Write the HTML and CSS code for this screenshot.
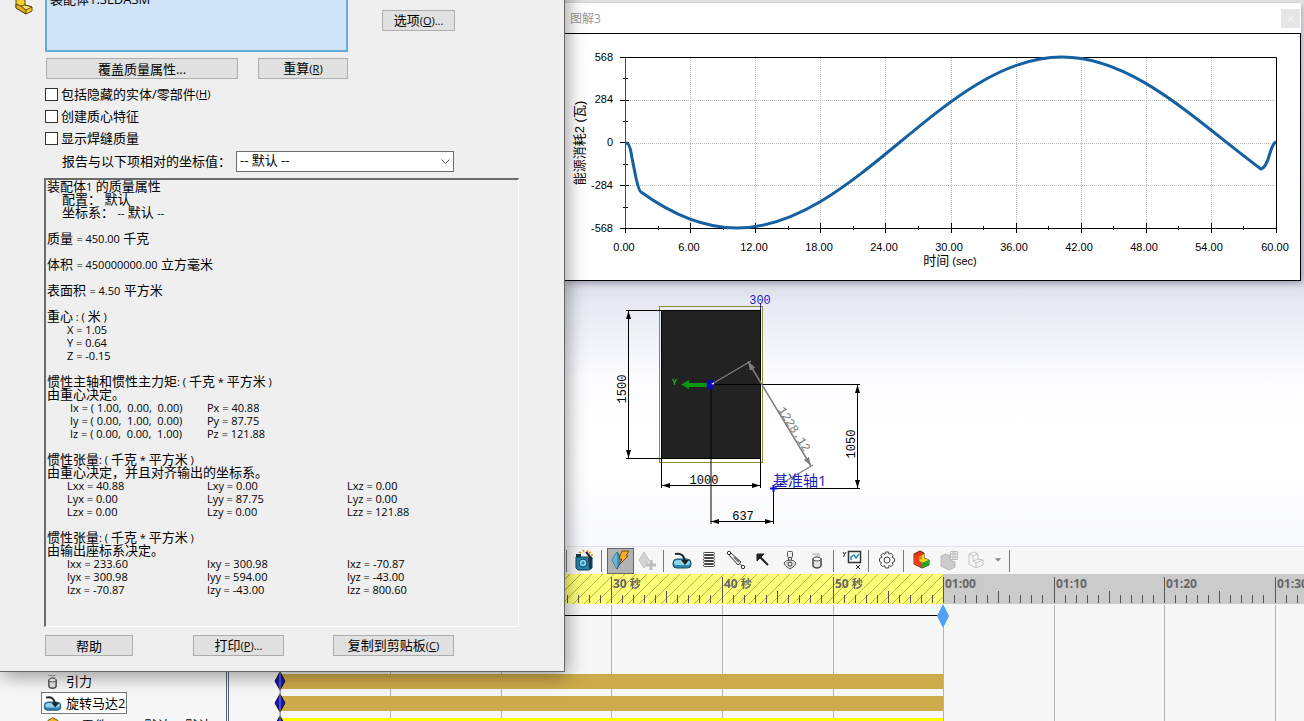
FILE: index.html
```html
<!DOCTYPE html>
<html lang="zh-CN">
<head>
  <meta charset="UTF-8" />
  <meta name="viewport" content="width=device-width, initial-scale=1.0"/>
  <title>质量属性</title>
  <link rel="stylesheet" href="styles.css">
</head>
<body>
  <div class="app">

    <!-- Model view -->
    <main class="viewport">
      <svg class="model" viewBox="0 0 1304 546">
        <defs>
          <marker id="arrow" viewBox="0 0 8 6" refX="8" refY="3" markerWidth="8" markerHeight="6" markerUnits="userSpaceOnUse" orient="auto-start-reverse">
            <path d="M0 0.5L8 3L0 5.5z" fill="#000"/>
          </marker>
          <marker id="arrowGray" viewBox="0 0 9 6" refX="9" refY="3" markerWidth="9" markerHeight="6" markerUnits="userSpaceOnUse" orient="auto-start-reverse">
            <path d="M0 0L9 3L0 6z" fill="#808080"/>
          </marker>
        </defs>
        <rect x="661" y="310" width="100" height="149" fill="#222"/>
        <rect x="659.5" y="306.5" width="103" height="156" fill="none" stroke="#8c8c32"/>
        <path class="dim" d="M626 310.5H761M626 458.5H761M661.5 310V488M760.5 310V488"/>
        <path class="dim" d="M711 384V524M711 384.5H860M773.5 489V524M773 488.5H860"/>
        <g class="dim">
          <path marker-start="url(#arrow)" marker-end="url(#arrow)" d="M628.5 311V458"/>
          <path marker-start="url(#arrow)" marker-end="url(#arrow)" d="M662 485.5H760"/>
          <path marker-start="url(#arrow)" marker-end="url(#arrow)" d="M711 521.5H773"/>
          <path marker-start="url(#arrow)" marker-end="url(#arrow)" d="M857.5 385V488"/>
        </g>
        <path d="M712 384L751 361M774 488L813 465" stroke="#808080" stroke-width="1.3"/>
        <path d="M748 361.500L811 466" stroke="#808080" stroke-width="1.5" marker-start="url(#arrowGray)" marker-end="url(#arrowGray)"/>
        <path d="M760.5 303V310" stroke="#22b"/>
        <path d="M681 384.500L689 380V383H708V387H689V389z" fill="#0c960c"/>
        <ellipse cx="710.5" cy="384.500" rx="4" ry="5" fill="#0a0ab4"/>
        <path d="M711 384l3-1.500v2z" fill="#fff"/>
        <path d="M770 488.500H777M773.500 485V492" stroke="#11d" stroke-width="2"/>
        <text class="axis-y" x="672" y="385">Y</text>
        <text class="dim-text blue" x="760" y="304">300</text>
        <text class="dim-text" x="704" y="484">1000</text>
        <text class="dim-text" x="743" y="520">637</text>
        <text class="dim-text" transform="translate(626 389) rotate(-90)">1500</text>
        <text class="dim-text" transform="translate(855 444) rotate(-90)">1050</text>
        <text class="dim-text gray" transform="translate(791 431) rotate(58)">1228.12</text>
        <text class="axis-name" x="773" y="486">基准轴1</text>
      </svg>
    </main>

    <!-- Motion study -->
    <section class="motion">
      <div class="toolbar">
        <span class="sep"></span>
        <button class="tool" aria-label="保存动画">
          <svg viewBox="0 0 22 22"><path d="M2 8h12l4 1v10l-3 2H4l-2-2z" fill="#2586ac" stroke="#123c50"/><path d="M2 5h5v3H2zM14 9l4 1v9l-3 1z" fill="#16384a"/><circle cx="9" cy="14" r="4" fill="#8ad1ec" stroke="#11475f"/><circle cx="9" cy="14" r="1.500" fill="#2586ac"/><path d="M12 3l6 7" stroke="#222" stroke-width="2"/><path d="M5 3l2 1M9 1l1 2M14 1l-1 2M17 3l-2 1M19 6h-2" stroke="#ec8b13" stroke-width="1.500"/></svg>
        </button>
        <span class="sep"></span>
        <button class="tool pressed" aria-label="自动键码">
          <svg viewBox="0 0 22 22"><path d="M8 3l5 8-5 9-5-9z" fill="#3c91bd" stroke="#1d5877"/><path d="M8 3v17l-5-9z" fill="#67b5d8"/><path d="M13 2h7l-3 5h2l-9 9 3-6h-3z" fill="#ffae25" stroke="#7a4d12"/></svg>
        </button>
        <button class="tool" aria-label="添加键码">
          <svg viewBox="0 0 22 22"><path d="M8 3l5 8-5 8-5-8z" fill="#d4d4d4" stroke="#c2c2c2"/><path d="M15 11v10M10 16h10" stroke="#bdbdbd" stroke-width="3"/></svg>
        </button>
        <span class="sep"></span>
        <button class="tool" aria-label="马达">
          <svg viewBox="0 0 22 22"><use href="#motor"/></svg>
        </button>
        <button class="tool" aria-label="弹簧">
          <svg viewBox="0 0 22 22"><g fill="#fff" stroke="#444"><rect x="5.500" y="3.500" width="11" height="2" rx="1"/><rect x="5.500" y="6.500" width="11" height="2" rx="1"/><rect x="5.500" y="9.500" width="11" height="2" rx="1"/><rect x="5.500" y="12.500" width="11" height="2" rx="1"/><rect x="5.500" y="15.500" width="11" height="2" rx="1"/></g></svg>
        </button>
        <button class="tool" aria-label="阻尼">
          <svg viewBox="0 0 22 22"><path d="M4 4l14 14" stroke="#444"/><path d="M6 4l10 9-3 3-9-10z" fill="#eee" stroke="#333"/><path d="M9 8l5 5" stroke="#777" stroke-width="2"/><circle cx="4" cy="4" r="1.700" fill="#fff" stroke="#333"/><circle cx="18" cy="18" r="1.700" fill="#fff" stroke="#333"/></svg>
        </button>
        <button class="tool" aria-label="力">
          <svg viewBox="0 0 22 22"><path d="M7 7l9 9" stroke="#222" stroke-width="2"/><path d="M5 5h7l-3 3-4 4z" fill="#222" stroke="#222"/></svg>
        </button>
        <button class="tool" aria-label="接触">
          <svg viewBox="0 0 22 22"><rect x="8.500" y="2.500" width="5" height="6" rx="1" fill="#eee" stroke="#555"/><path d="M9.500 8v4M12.500 8v4" stroke="#555"/><path d="M5 14q2-3 6-3t6 3q-1 3-3 4l-3 2-3-2q-2-1-3-4z" fill="#ddd" stroke="#555"/><circle cx="11" cy="15" r="2" fill="#fff" stroke="#333"/></svg>
        </button>
        <button class="tool" aria-label="引力">
          <svg viewBox="0 0 22 22"><use href="#gravity"/></svg>
        </button>
        <span class="sep"></span>
        <button class="tool" aria-label="结果和图解">
          <svg viewBox="0 0 22 22"><rect x="7.500" y="2.500" width="12" height="11" fill="#fff" stroke="#333" stroke-width="1.500"/><path d="M10 11V8l3-2 2 3 3-4" stroke="#2888b5" stroke-width="1.500" fill="none"/><path d="M2 3l1.500 2.500L5 3M3.500 5.500L2.500 8M15 16l4 4M19 16l-4 4" stroke="#222" fill="none"/></svg>
        </button>
        <span class="sep"></span>
        <button class="tool" aria-label="运动算例属性">
          <svg viewBox="0 0 22 22"><path d="M9.500 3h3l.6 2.300 2-1 2 2-1 2L18.500 9.500v3l-2.400 1 1 2-2 2-2-1-.6 2.500h-3l-1-2.500-2 1-2-2 1-2L3.500 12.500v-3L6 8.300l-1-2 2-2 2 1z" fill="#f4f4f4" stroke="#444"/><circle cx="11" cy="11" r="3" fill="#fff" stroke="#444"/></svg>
        </button>
        <span class="sep"></span>
        <button class="tool" aria-label="模拟设置">
          <svg viewBox="0 0 22 22"><path d="M3 5l6-3 4 2v5l5 2v5l-7 3-8-4z" fill="#e33616" stroke="#5b2f10"/><path d="M3 6l5 2v5l3 1v5l-8-4z" fill="#e8401a"/><path d="M8 8l5-3v4l5 2-6 3-4-2z" fill="#e9d91d"/><path d="M8 8l3-2v4l-3 2z" fill="#ef8d0f"/><path d="M11 14l7-3v5l-7 3z" fill="#25a52c"/></svg>
        </button>
        <button class="tool" aria-label="网格">
          <svg viewBox="0 0 22 22"><path d="M3 7l5-2 4 2v4l5 2v5l-6 3-8-4z" fill="#ccc" stroke="#b8b8b8"/><path d="M12.500 2.500h7v8h-7zM15 2v9M17 2v9M12 5h8M12 8h8" fill="#f5f5f5" stroke="#bbb"/></svg>
        </button>
        <button class="tool" aria-label="计算">
          <svg viewBox="0 0 22 22"><path d="M4 5l5-2 4 2v5l5 1v5l-7 3-7-4zM4 5l4 2v5l3 2v5M8 7l5-2M11 14l7-3M8 12l5-2" fill="#f7f7f7" stroke="#c2c2c2"/></svg>
        </button>
        <button class="tool drop" aria-label="更多">
          <svg viewBox="0 0 7 4"><path d="M0 0h7L3.500 4z" fill="#888"/></svg>
        </button>
        <span class="sep"></span>
      </div>

      <div class="study">
        <ul class="tree">
          <li>
            <span class="node">
              <svg viewBox="0 0 22 22">
                <g id="gravity"><path d="M6 5h8M9 7h5" stroke="#aaa"/><path d="M7 10h8v7q-1 2-4 2t-4-2z" fill="#e4e4e4" stroke="#444" stroke-width="1.500"/><ellipse cx="11" cy="10" rx="4" ry="2" fill="#fff" stroke="#555"/></g>
              </svg>引力
            </span>
          </li>
          <li>
            <span class="node selected">
              <svg viewBox="0 0 22 22">
                <g id="motor"><path d="M2 14q0-4 4-4h10q4 0 4 4v2q0 3-4 3H6q-4 0-4-3z" fill="#2d87ae" stroke="#184f69"/><path d="M3 14q0-3 4-3h9q3 0 3 3 0 2-3 2H6q-3 0-3-2z" fill="#92d3ec"/><path d="M4 5q9-2 10 8" fill="none" stroke="#1d2528" stroke-width="2"/><path d="M10 11h8l-4 5z" fill="#1d2528"/></g>
              </svg>旋转马达2
            </span>
          </li>
          <li>
            <span class="node">
              <svg viewBox="0 0 22 22"><path d="M6 6l5-3 6 3v7l-6 3-6-3z" fill="#f2b926" stroke="#6c4c07"/></svg>(-) 零件1&lt;1&gt; (默认&lt;&lt;默认&gt;
            </span>
          </li>
        </ul>

        <!-- Ruler, grid and keys: ten seconds are about 111px wide -->
        <svg class="timeline">
          <defs>
            <pattern id="hatch" width="11" height="11" patternUnits="userSpaceOnUse">
              <rect width="11" height="11" fill="#ffff78"/>
              <path d="M-1 12L12 -1M-1 1L1 -1M10 12L12 10" stroke="#b4b44a"/>
            </pattern>
            <g id="decade">
              <path d="M.5 3V29" stroke="#555"/>
              <path d="M11.500 21V29M22.500 21V29M33.500 21V29M44.500 21V29M55.500 17V29M66.500 21V29M77.500 21V29M88.500 21V29M99.500 21V29" stroke="#555"/>
              <path d="M.5 31V147" stroke="#b4b4b4"/>
            </g>
            <path id="key" d="M0-9L5 0L0 9L-5 0z" fill="#1616c8" stroke="#111"/>
          </defs>
          <rect width="100%" height="30" fill="#cbcbcb"/>
          <rect width="714" height="30" fill="url(#hatch)"/>
          <use href="#decade" x="51"/>
          <use href="#decade" x="161"/>
          <use href="#decade" x="272"/>
          <use href="#decade" x="382"/>
          <use href="#decade" x="493"/>
          <use href="#decade" x="604"/>
          <use href="#decade" x="714"/>
          <use href="#decade" x="825"/>
          <use href="#decade" x="935"/>
          <use href="#decade" x="1046"/>
          <g class="ruler-text">
            <text x="384" y="14">30 <tspan class="unit">秒</tspan></text>
            <text x="495" y="14">40 <tspan class="unit">秒</tspan></text>
            <text x="606" y="14">50 <tspan class="unit">秒</tspan></text>
            <text x="716" y="14">01:00</text>
            <text x="827" y="14">01:10</text>
            <text x="937" y="14">01:20</text>
            <text x="1048" y="14">01:30</text>
          </g>
          <path d="M51 41.500H714" stroke="#000"/>
          <path d="M714 30l6 12-6 12-6-12z" fill="#4fa3f7"/>
          <rect x="51" y="100" width="663" height="15" fill="#cdab4a"/>
          <rect x="51" y="122" width="663" height="15" fill="#cdab4a"/>
          <rect x="51" y="144" width="663" height="15" fill="#ff0"/>
          <use href="#key" x="51" y="107"/>
          <use href="#key" x="51" y="129"/>
          <use href="#key" x="51" y="151"/>
          <path d="M51 96V147" stroke="#8a8aa8"/>
        </svg>
      </div>
    </section>
  </div>

  <!-- Plot window -->
  <section class="window plot">
    <header class="plot-title">
      <h2>图解3</h2>
      <button class="close" aria-label="关闭">×</button>
    </header>
    <svg class="chart" viewBox="565 34 735 246">
      <path class="grid" d="M690.500 58V228M755.500 58V228M820.500 58V228M885.500 58V228M951.500 58V228M1016.500 58V228M1081.500 58V228M1146.500 58V228M1211.500 58V228M626 100.500H1276M626 143.500H1276M626 185.500H1276"/>
      <path class="axis" d="M620 57.500H1276.500V233M620 228.500H1276"/>
      <path class="axis" d="M620 100.500H629M620 142.500H629M620 185.500H629M623 78.500H628M623 121.500H628M623 164.500H628M623 207.500H628"/>
      <path class="axis" d="M625.500 229V233M690.500 223V233M755.500 223V233M820.500 223V233M885.500 223V233M951.500 223V233M1016.500 223V233M1081.500 223V233M1146.500 223V233M1211.500 223V233"/>
      <path class="axis" d="M658.500 226V230M723.500 226V230M788.500 226V230M853.500 226V230M918.500 226V230M983.500 226V230M1048.500 226V230M1113.500 226V230M1178.500 226V230M1243.500 226V230"/>
      <rect x="625" y="58" width="1" height="170" fill="#c81414"/>
      <path class="curve" d="M626 143Q630 143 632 158L636 178Q639 191 641 192C670 213 702 228 737 228C855 228 944 57 1062 57C1134 57 1196 121 1261 169Q1266 168 1270 153Q1273 143 1276 142"/>
      <g class="ylabels">
        <text x="613" y="61">568</text>
        <text x="613" y="103">284</text>
        <text x="613" y="146">0</text>
        <text x="613" y="189">-284</text>
        <text x="613" y="232">-568</text>
      </g>
      <g class="xlabels">
        <text x="624" y="251">0.00</text>
        <text x="689" y="251">6.00</text>
        <text x="754" y="251">12.00</text>
        <text x="819" y="251">18.00</text>
        <text x="884" y="251">24.00</text>
        <text x="949" y="251">30.00</text>
        <text x="1014" y="251">36.00</text>
        <text x="1079" y="251">42.00</text>
        <text x="1144" y="251">48.00</text>
        <text x="1209" y="251">54.00</text>
        <text x="1275" y="251">60.00</text>
        <text x="950" y="265"><tspan class="cn">时间</tspan> (sec)</text>
        <text class="cn" transform="translate(584 143) rotate(-90)">能源消耗2 (瓦)</text>
      </g>
    </svg>
  </section>

  <!-- Mass properties dialog -->
  <section class="window dialog">
    <div class="selection">
      <svg class="part-icon" viewBox="0 0 18 18"><path d="M1 3l5-2 4 2v5l7 2v4l-6 3-10-6z" fill="#f7cf2f" stroke="#5c4a10"/><path d="M1 7l5 2 5 4v4l-10-6z" fill="#e3ac18" stroke="#5c4a10"/><path d="M6 9l4-1 7 2-6 3z" fill="#ffe26a" stroke="#5c4a10"/></svg>
      <ul class="selection-list"><li>装配体1.SLDASM</li></ul>
      <button class="btn options">选项<small>(<u>O</u>)...</small></button>
    </div>
    <div class="actions">
      <button class="btn">覆盖质量属性...</button>
      <button class="btn">重算<small>(<u>R</u>)</small></button>
    </div>
    <div class="checks">
      <label><input type="checkbox">包括隐藏的实体/零部件<small>(<u>H</u>)</small></label>
      <label><input type="checkbox">创建质心特征</label>
      <label><input type="checkbox">显示焊缝质量</label>
    </div>
    <div class="coord">
      <label for="coord">报告与以下项相对的坐标值：</label>
      <div class="select-box">
        <select id="coord"><option>-- 默认 --</option></select>
        <svg viewBox="0 0 9 5"><path d="M.5 .5l4 4 4-4" fill="none" stroke="#444"/></svg>
      </div>
    </div>
    <div class="report">
      <p>装配体<small>1</small> 的质量属性</p>
      <p class="indent">配置： 默认</p>
      <p class="indent">坐标系： <small>--</small> 默认 <small>--</small></p>
      <p class="gap">质量 <small>= 450.00</small> 千克</p>
      <p class="gap">体积 <small>= 450000000.00</small> 立方毫米</p>
      <p class="gap">表面积 <small>= 4.50</small> 平方米</p>
      <p class="gap">重心<small> : ( </small>米<small> )</small></p>
      <table>
        <tr><td>X = 1.05</td></tr>
        <tr><td>Y = 0.64</td></tr>
        <tr><td>Z = -0.15</td></tr>
      </table>
      <p class="gap">惯性主轴和惯性主力矩<small>: ( </small>千克<small> * </small>平方米<small> )</small></p>
      <p>由重心决定。</p>
      <table class="axes">
        <tr><td>Ix = ( 1.00,  0.00,  0.00)</td><td>Px = 40.88</td></tr>
        <tr><td>Iy = ( 0.00,  1.00,  0.00)</td><td>Py = 87.75</td></tr>
        <tr><td>Iz = ( 0.00,  0.00,  1.00)</td><td>Pz = 121.88</td></tr>
      </table>
      <p class="gap">惯性张量<small>: ( </small>千克<small> * </small>平方米<small> )</small></p>
      <p>由重心决定，并且对齐输出的坐标系。</p>
      <table>
        <tr><td>Lxx = 40.88</td><td>Lxy = 0.00</td><td>Lxz = 0.00</td></tr>
        <tr><td>Lyx = 0.00</td><td>Lyy = 87.75</td><td>Lyz = 0.00</td></tr>
        <tr><td>Lzx = 0.00</td><td>Lzy = 0.00</td><td>Lzz = 121.88</td></tr>
      </table>
      <p class="gap">惯性张量<small>: ( </small>千克<small> * </small>平方米<small> )</small></p>
      <p>由输出座标系决定。</p>
      <table>
        <tr><td>Ixx = 233.60</td><td>Ixy = 300.98</td><td>Ixz = -70.87</td></tr>
        <tr><td>Iyx = 300.98</td><td>Iyy = 594.00</td><td>Iyz = -43.00</td></tr>
        <tr><td>Izx = -70.87</td><td>Izy = -43.00</td><td>Izz = 800.60</td></tr>
      </table>
    </div>
    <div class="footer">
      <button class="btn">帮助</button>
      <button class="btn">打印<small>(<u>P</u>)...</small></button>
      <button class="btn">复制到剪贴板<small>(<u>C</u>)</small></button>
    </div>
  </section>
</body>
</html>
```
FILE: styles.css
```css
/* Base reset */
* {
  box-sizing: border-box;
  margin: 0;
  padding: 0;
}

body {
  font-family: "Open Sans", "Noto Sans CJK SC", sans-serif;
  font-size: 13px;
  color: #000;
  overflow: hidden;
}

button,
select {
  font: inherit;
  color: inherit;
}

small {
  font-size: 11px;
}

ul {
  list-style: none;
}

/* Main application */
.app {
  display: flex;
  flex-direction: column;
  height: 100vh;
}

.viewport {
  flex: 1;
  min-height: 0;
  background: linear-gradient(#e6e6e8, #d2d4df 50%, #e6e9f3 55%, #fdfdff 70%, #ffffff 85%, #f8f9fd);
}

.model {
  display: block;
  width: 100%;
}

.dim {
  fill: none;
  stroke: #000;
}

.dim-text {
  font-family: "Liberation Mono", monospace;
  font-size: 12px;
  text-anchor: middle;
}

.dim-text.gray {
  fill: #777;
}

.dim-text.blue {
  fill: #22b;
}

.axis-name {
  font-size: 15px;
  fill: #1c1cb4;
}

.axis-y {
  font-size: 8px;
  font-weight: bold;
  fill: #18b418;
}

/* Motion study */
.motion {
  border-top: 1px solid #dfe0ea;
  background-color: #f7f7f7;
}

.toolbar {
  display: flex;
  align-items: center;
  height: 27px;
  padding-left: 564px;
}

.sep {
  width: 1px;
  height: 22px;
  margin: 0 5px 0 2px;
  background-color: #777;
}

.tool {
  display: flex;
  align-items: center;
  justify-content: center;
  width: 27px;
  height: 26px;
  padding: 0 1px 1px 0;
  border: 1px solid transparent;
  background: none;
}

.tool svg {
  width: 22px;
  height: 22px;
  flex: none;
}

.tool.pressed {
  border-color: #666;
  background-color: #b3b3b3;
}

.tool.drop {
  width: 17px;
}

.tool.drop svg {
  width: 6px;
  height: 4px;
}

.study {
  display: flex;
  height: 147px;
}

.tree {
  flex: none;
  width: 229px;
  padding: 96px 0 0 41px;
  border-right: 3px double #555e78;
  overflow: hidden;
}

.tree li {
  height: 22px;
}

.node {
  display: inline-flex;
  align-items: center;
  gap: 3px;
  height: 22px;
  padding: 0 1px 1px 0;
  border: 1px solid transparent;
  white-space: nowrap;
}

.node svg {
  width: 21px;
  height: 20px;
}

.node.selected {
  border-color: #777;
  background-color: #fff;
}

.timeline {
  flex: 1;
  height: 147px;
}

.ruler-text {
  font-size: 12px;
  font-weight: bold;
  fill: #666;
}

.unit {
  font-size: 11px;
}

/* Floating windows */
.window {
  position: absolute;
}

.plot {
  top: 3px;
  left: 565px;
  right: 3px;
  background-color: #fff;
  box-shadow: 1px 2px 6px rgba(60, 60, 90, 0.4);
}

.plot-title {
  display: flex;
  align-items: center;
  justify-content: space-between;
  height: 30px;
  padding: 0 1px 0 5px;
}

.plot-title h2 {
  font-size: 12px;
  font-weight: normal;
  color: #999;
}

.close {
  width: 19px;
  height: 19px;
  border: none;
  background-color: #e5e5e5;
  color: #f8f8f8;
  font-size: 12px;
  line-height: 19px;
}

.chart {
  display: block;
  width: 100%;
  border: 1px solid #000;
  border-left: none;
  font-family: "Liberation Sans", "Noto Sans CJK SC", sans-serif;
  font-size: 11px;
}

.axis {
  fill: none;
  stroke: #000;
}

.grid {
  fill: none;
  stroke: #bbb;
  stroke-dasharray: 1 1;
}

.curve {
  fill: none;
  stroke: #1460a0;
  stroke-width: 3;
  stroke-linejoin: round;
}

.ylabels {
  text-anchor: end;
}

.xlabels {
  text-anchor: middle;
}

.cn {
  font-size: 13px;
}

/* Mass properties dialog, its top lies above the screen edge */
.dialog {
  top: -20px;
  left: 0;
  width: 565px;
  padding: 0 45px 15px;
  border-right: 1px solid #666;
  border-bottom: 1px solid #666;
  background-color: #efefef;
  box-shadow: 2px 4px 18px rgba(0, 0, 0, 0.4);
}

.btn {
  height: 21px;
  border: 1px solid #adadad;
  background-color: #e1e1e1;
  line-height: 18px;
  white-space: nowrap;
}

.selection {
  display: flex;
  height: 72px;
  margin-left: -30px;
}

.part-icon {
  width: 18px;
  height: 18px;
  margin: 17px 12px 0 0;
}

.selection-list {
  width: 303px;
  padding: 7px 3px;
  border: 2px solid #5fadde;
  background-color: #cfe4f8;
}

.options {
  width: 73px;
  margin: 30px 0 0 34px;
}

.actions {
  display: grid;
  grid-template-columns: 192px 90px;
  gap: 20px;
  padding: 6px 0 0 1px;
}

.checks {
  padding-top: 4px;
}

.checks label {
  display: flex;
  align-items: center;
  height: 22px;
  line-height: 16px;
}

.checks input {
  appearance: none;
  width: 13px;
  height: 13px;
  margin-right: 3px;
  border: 1px solid #333;
  background-color: #fff;
}

.coord {
  display: flex;
  align-items: center;
  padding: 2px 0 0 17px;
}

.coord label {
  width: 174px;
  padding-bottom: 2px;
  white-space: nowrap;
}

.select-box {
  display: grid;
  align-items: center;
  width: 218px;
}

.select-box select,
.select-box svg {
  grid-area: 1 / 1;
}

.select-box select {
  appearance: none;
  height: 21px;
  padding: 0 3px 2px;
  border: 1px solid #6e6e6e;
  border-radius: 0;
  background-color: #fff;
  line-height: 17px;
}

.select-box svg {
  justify-self: end;
  width: 9px;
  height: 5px;
  margin-right: 4px;
}

.report {
  height: 449px;
  margin: 6px 0 0 -1px;
  padding-left: 1px;
  border: 1px solid #fff;
  border-top: 2px solid #6b6b6b;
  border-left: 2px solid #6b6b6b;
}

.report p {
  height: 13px;
  line-height: 13px;
  white-space: nowrap;
}

.report .indent {
  padding-left: 15px;
}

.report .gap {
  margin-top: 13px;
}

.report table {
  margin-left: 20px;
  border-collapse: collapse;
  table-layout: fixed;
  font-size: 11px;
}

.report td {
  width: 140px;
  height: 13px;
  line-height: 13px;
  white-space: pre;
}

.axes td:first-child {
  padding-left: 3px;
}

.footer {
  display: grid;
  grid-template-columns: 88px 91px 121px;
  column-gap: 49px;
  padding-top: 8px;
}

.footer .btn:nth-child(2) {
  justify-self: end;
  width: 91px;
}

/* Print sits nearer to the copy button */
.footer {
  grid-template-columns: 88px 102px 121px;
}
```
